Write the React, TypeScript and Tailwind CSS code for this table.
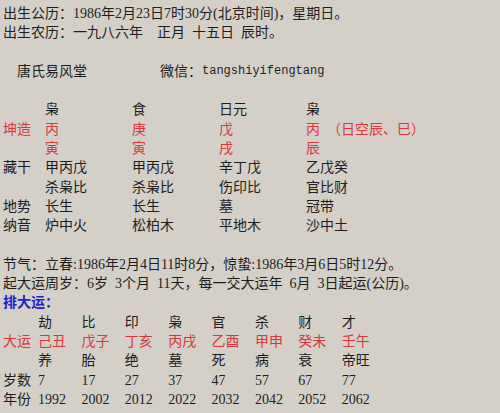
const red = "text-[#d8383a]";

const pillars = [
  { label: "", cells: ["枭", "食", "日元", "枭"], color: "" },
  { label: "坤造", cells: ["丙", "庚", "戊", "丙\u2002（日空辰、巳）"], color: red },
  { label: "", cells: ["寅", "寅", "戌", "辰"], color: red },
  { label: "藏干", cells: ["甲丙戊", "甲丙戊", "辛丁戊", "乙戊癸"], color: "" },
  { label: "", cells: ["杀枭比", "杀枭比", "伤印比", "官比财"], color: "" },
  { label: "地势", cells: ["长生", "长生", "墓", "冠带"], color: "" },
  { label: "纳音", cells: ["炉中火", "松柏木", "平地木", "沙中土"], color: "" },
];

const dayun = [
  { label: "", cells: ["劫", "比", "印", "枭", "官", "杀", "财", "才"], color: "" },
  { label: "大运", cells: ["己丑", "戊子", "丁亥", "丙戌", "乙酉", "甲申", "癸未", "壬午"], color: red },
  { label: "", cells: ["养", "胎", "绝", "墓", "死", "病", "衰", "帝旺"], color: "" },
  { label: "岁数", cells: ["7", "17", "27", "37", "47", "57", "67", "77"], color: "" },
  { label: "年份", cells: ["1992", "2002", "2012", "2022", "2032", "2042", "2052", "2062"], color: "" },
];

function Blank() {
  return <div className="h-[19.3px]" />;
}

export default function App() {
  return (
    <div className="h-[413px] w-[500px] overflow-hidden bg-[#d4d0c8] pl-[3px] pt-[4px] text-[14px] leading-[19.3px] text-[#1e1e1e] font-['Liberation_Serif','Noto_Sans_CJK_SC',serif]">
      <div className="whitespace-pre">出生公历：1986年2月23日7时30分(北京时间)，星期日。</div>
      <div className="whitespace-pre">{`出生农历：一九八六年\u2002\u2002正月\u2002十五日\u2002辰时。`}</div>
      <Blank />
      <div className="flex pl-[14px]">
        <span className="w-[143px] shrink-0">唐氏易风堂</span>
        <span>微信：</span>
        <span className="font-['Liberation_Mono',monospace] text-[12px]">tangshiyifengtang</span>
      </div>
      <Blank />

      {pillars.map((row, i) => (
        <div key={i} className={`grid grid-cols-[42px_87px_87px_87px_1fr] whitespace-pre ${row.color}`}>
          <span>{row.label}</span>
          {row.cells.map((c, j) => (
            <span key={j}>{c}</span>
          ))}
        </div>
      ))}

      <Blank />
      <div className="whitespace-pre">节气：立春:1986年2月4日11时8分，惊蛰:1986年3月6日5时12分。</div>
      <div className="whitespace-pre">{`起大运周岁：6岁\u20023个月\u200211天，每一交大运年\u20026月\u20023日起运(公历)。`}</div>
      <div className="font-bold text-[#1c22c8]">排大运：</div>

      {dayun.map((row, i) => (
        <div
          key={i}
          className={`grid grid-cols-[35px_43.4px_43.4px_43.4px_43.4px_43.4px_43.4px_43.4px_1fr] whitespace-pre ${row.color}`}
        >
          <span>{row.label}</span>
          {row.cells.map((c, j) => (
            <span key={j}>{c}</span>
          ))}
        </div>
      ))}
    </div>
  );
}
